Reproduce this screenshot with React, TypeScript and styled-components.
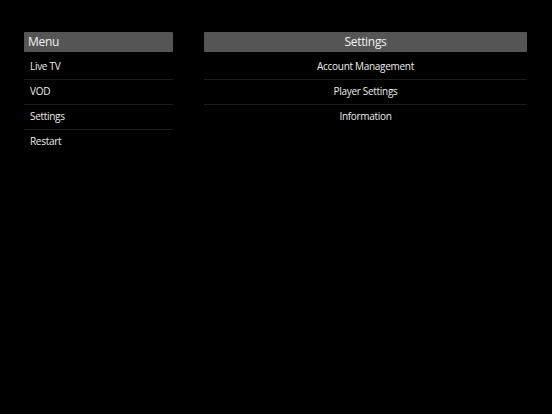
import React from "react";
import styled, { createGlobalStyle } from "styled-components";

const Global = createGlobalStyle`
  html, body { margin: 0; padding: 0; background: #000; }
  body { font-family: "Open Sans", "Liberation Sans", sans-serif; color: #ececec; }
`;

const Page = styled.div`
  width: 552px;
  height: 414px;
  background: #000;
  box-sizing: border-box;
  padding: 32px 25px 0 24px;
  display: grid;
  grid-template-columns: 149px 323px;
  column-gap: 31px;
  align-items: start;
`;

const Panel = styled.div`
  display: flex;
  flex-direction: column;
`;

const Header = styled.div<{ $center?: boolean }>`
  height: 20px;
  box-sizing: border-box;
  background: #555555;
  border-radius: 1px;
  display: flex;
  align-items: center;
  justify-content: ${(p) => (p.$center ? "center" : "flex-start")};
  padding: 0 ${(p) => (p.$center ? "0" : "4px")} 1px;
  font-size: 12px;
  letter-spacing: -0.3px;
  color: #f2f2f2;
  margin-bottom: 3px;
`;

const Row = styled.div<{ $center?: boolean }>`
  height: 25px;
  box-sizing: border-box;
  display: flex;
  align-items: center;
  justify-content: ${(p) => (p.$center ? "center" : "flex-start")};
  padding: 0 ${(p) => (p.$center ? "0" : "6px")} 2px;
  font-size: 10px;
  letter-spacing: -0.3px;
  color: #ececec;
  border-bottom: 1px solid #1c1c1c;
  &:last-child { border-bottom: 1px solid transparent; }
`;

const menu = ["Live TV", "VOD", "Settings", "Restart"];
const settings = ["Account Management", "Player Settings", "Information"];

export default function App() {
  return (
    <>
      <Global />
      <Page>
        <Panel>
          <Header>Menu</Header>
          {menu.map((m) => (
            <Row key={m}>{m}</Row>
          ))}
        </Panel>
        <Panel>
          <Header $center>Settings</Header>
          {settings.map((s) => (
            <Row key={s} $center>
              {s}
            </Row>
          ))}
        </Panel>
      </Page>
    </>
  );
}
